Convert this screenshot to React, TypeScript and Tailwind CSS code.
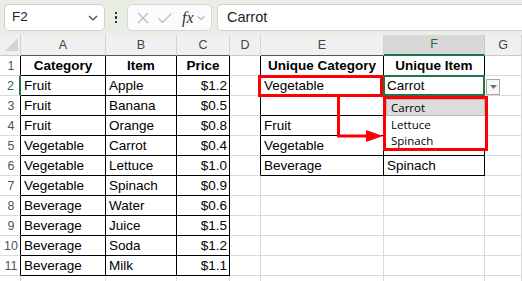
import type { ReactNode } from "react";

const COLS = ["", "A", "B", "C", "D", "E", "F", "G"];

// rows 1..12 of the sheet, columns A..G
const DATA: string[][] = [
  ["Category", "Item", "Price", "", "Unique Category", "Unique Item", ""],
  ["Fruit", "Apple", "$1.2", "", "Vegetable", "Carrot", ""],
  ["Fruit", "Banana", "$0.5", "", "", "", ""],
  ["Fruit", "Orange", "$0.8", "", "Fruit", "", ""],
  ["Vegetable", "Carrot", "$0.4", "", "Vegetable", "", ""],
  ["Vegetable", "Lettuce", "$1.0", "", "Beverage", "Spinach", ""],
  ["Vegetable", "Spinach", "$0.9", "", "", "", ""],
  ["Beverage", "Water", "$0.6", "", "", "", ""],
  ["Beverage", "Juice", "$1.5", "", "", "", ""],
  ["Beverage", "Soda", "$1.2", "", "", "", ""],
  ["Beverage", "Milk", "$1.1", "", "", "", ""],
  ["", "", "", "", "", "", ""],
];

function inTable(r: number, c: number) {
  const t1 = r >= 1 && r <= 11 && c >= 1 && c <= 3;
  const t2 = r >= 1 && r <= 6 && c >= 5 && c <= 6;
  return t1 || t2;
}

function Chevron({ className }: { className?: string }) {
  return (
    <svg width="10" height="6" viewBox="0 0 10 6" className={className}>
      <path d="M1 1 L5 5 L9 1" fill="none" stroke="currentColor" strokeWidth="1.2" />
    </svg>
  );
}

function FormulaBar() {
  return (
    <div className="flex h-[35px] items-start gap-0 bg-[#e8eee4] pt-[4px] pl-[4px]">
      <div className="flex h-[27px] w-[101px] items-center justify-between rounded-[5px] border border-[#d0d0d0] bg-white pl-[7px] pr-[6px] text-[13.5px] text-[#222]">
        <span>F2</span>
        <Chevron className="text-[#444]" />
      </div>
      <div className="flex w-[22px] flex-col items-center justify-center gap-[2px] self-center pb-[4px]">
        <span className="h-[2.5px] w-[2.5px] bg-[#333]" />
        <span className="h-[2.5px] w-[2.5px] bg-[#333]" />
        <span className="h-[2.5px] w-[2.5px] bg-[#333]" />
      </div>
      <div className="flex h-[27px] w-[85px] items-center rounded-[5px] border border-[#d6d6d6] bg-[#fbfbfb] pl-[8px]">
        <svg width="14" height="14" viewBox="0 0 14 14" className="text-[#b8b8b8]">
          <path d="M2 2 L12 12 M12 2 L2 12" stroke="currentColor" strokeWidth="1.1" />
        </svg>
        <svg width="16" height="14" viewBox="0 0 16 14" className="ml-[7px] text-[#b8b8b8]">
          <path d="M1.5 7.5 L5.5 11.5 L14.5 2.5" fill="none" stroke="currentColor" strokeWidth="1.1" />
        </svg>
        <span className="ml-[9px] font-['Liberation_Serif',serif] text-[16px] italic leading-none text-[#333]">
          fx
        </span>
        <Chevron className="ml-[3px] w-[8px] text-[#777]" />
      </div>
      <div className="ml-[5px] flex h-[27px] flex-1 items-center rounded-l-[5px] border border-r-0 border-[#d0d0d0] bg-white pl-[9px] text-[14.5px] text-[#222]">
        Carrot
      </div>
    </div>
  );
}

function HeaderCell({ c }: { c: number }) {
  if (c === 0) {
    return (
      <div className="relative border-r border-b border-r-[#d0d0d0] border-b-[#c8c8c8] bg-[#f0f0f0]">
        <svg width="13" height="13" viewBox="0 0 13 13" className="absolute left-[5px] bottom-[4px]">
          <path d="M13 0 L13 13 L0 13 Z" fill="#d4d4d4" />
        </svg>
      </div>
    );
  }
  if (c === 6) {
    return (
      <div className="flex items-center justify-center border-r border-b-2 border-r-[#c8c8c8] border-b-[#217346] bg-[#d8d8d8] text-[12.5px] text-[#1f6b42]">
        {COLS[c]}
      </div>
    );
  }
  const bottomBlack = inTable(1, c);
  return (
    <div
      className={
        "flex items-center justify-center border-r border-b border-r-[#d4d4d4] bg-[#f0f0f0] text-[12.5px] text-[#444] " +
        (bottomBlack ? "border-b-[#555]" : "border-b-[#c8c8c8]")
      }
    >
      {COLS[c]}
    </div>
  );
}

function RowHeader({ r }: { r: number }) {
  if (r === 2) {
    return (
      <div className="flex items-center justify-center border-r-2 border-b border-r-[#217346] border-b-[#dadada] bg-white pl-[2px] pt-[2px] text-[12.5px] text-[#1f6b42]">
        {r}
      </div>
    );
  }
  const rightBlack = inTable(r, 1);
  return (
    <div
      className={
        "flex items-center justify-center border-r border-b border-b-[#dadada] bg-white pl-[2px] pt-[2px] text-[12.5px] text-[#555] " +
        (rightBlack ? "border-r-black" : "border-r-[#c8c8c8]")
      }
    >
      {r <= 11 ? r : null}
    </div>
  );
}

function Cell({ r, c, children }: { r: number; c: number; children?: ReactNode }) {
  const rightBlack = inTable(r, c) || inTable(r, c + 1);
  const bottomBlack = inTable(r, c) || inTable(r + 1, c);
  const isHead = r === 1;
  const isPrice = c === 3 && r > 1;
  return (
    <div
      className={
        "relative flex items-center overflow-visible whitespace-nowrap border-r border-b bg-white pt-[2px] text-[13.5px] text-black " +
        (rightBlack ? "border-r-black " : "border-r-[#dadada] ") +
        (bottomBlack ? "border-b-black " : "border-b-[#dadada] ") +
        (isHead ? "justify-center font-bold " : isPrice ? "justify-end pr-[2px] " : "pl-[3px] ")
      }
    >
      {children}
      {r === 2 && c === 6 ? (
        <div className="absolute -left-[1px] -top-[1px] h-[21px] w-[102px] border-2 border-[#217346]" />
      ) : null}
    </div>
  );
}

function Sheet() {
  return (
    <div className="grid grid-cols-[21px_85px_71px_53px_31px_123px_101px_1fr] grid-rows-[21px_repeat(12,20px)]">
      {COLS.map((_, c) => (
        <HeaderCell key={"h" + c} c={c} />
      ))}
      {DATA.map((row, i) => {
        const r = i + 1;
        return [
          <RowHeader key={"r" + r} r={r} />,
          ...row.map((v, j) => (
            <Cell key={r + "-" + j} r={r} c={j + 1}>
              {v}
            </Cell>
          )),
        ];
      })}
    </div>
  );
}

function ValidationList() {
  return (
    <>
      {/* in-cell dropdown button */}
      <div className="absolute left-[486px] top-[79px] flex h-[16px] w-[14px] items-center justify-center border border-[#a8a8a8] bg-[#f7f7f7]">
        <svg width="7" height="4" viewBox="0 0 7 4">
          <path d="M0 0 L7 0 L3.5 4 Z" fill="#707070" />
        </svg>
      </div>
      {/* open list */}
      <div className="absolute left-[386px] top-[98px] flex h-[51px] w-[99px] flex-col bg-white pt-[1px] font-['Open_Sans',sans-serif] text-[11.5px] text-black">
        <div className="flex h-[17px] items-center border border-[#b8b8b8] bg-[#dcdcdc] pl-[4px]">Carrot</div>
        <div className="flex h-[17px] items-center pl-[5px]">Lettuce</div>
        <div className="flex h-[16px] items-center pl-[5px]">Spinach</div>
      </div>
    </>
  );
}

function Annotations() {
  return (
    <svg className="pointer-events-none absolute left-0 top-0" width="522" height="281" viewBox="0 0 522 281">
      <rect x="259.5" y="76.5" width="122" height="19" fill="none" stroke="#ff0000" strokeWidth="3" />
      <rect x="384.5" y="97.5" width="102" height="52" fill="none" stroke="#ff0000" strokeWidth="3" />
      <path d="M338.5 97 V136 H367" fill="none" stroke="#ff0000" strokeWidth="3" />
      <path d="M366 130 L383 136 L366 142 Z" fill="#ff0000" />
    </svg>
  );
}

export default function App() {
  return (
    <div className="relative h-[281px] w-[522px] overflow-hidden bg-white font-['Liberation_Sans',Arial,sans-serif]">
      <FormulaBar />
      <Sheet />
      <ValidationList />
      <Annotations />
    </div>
  );
}
